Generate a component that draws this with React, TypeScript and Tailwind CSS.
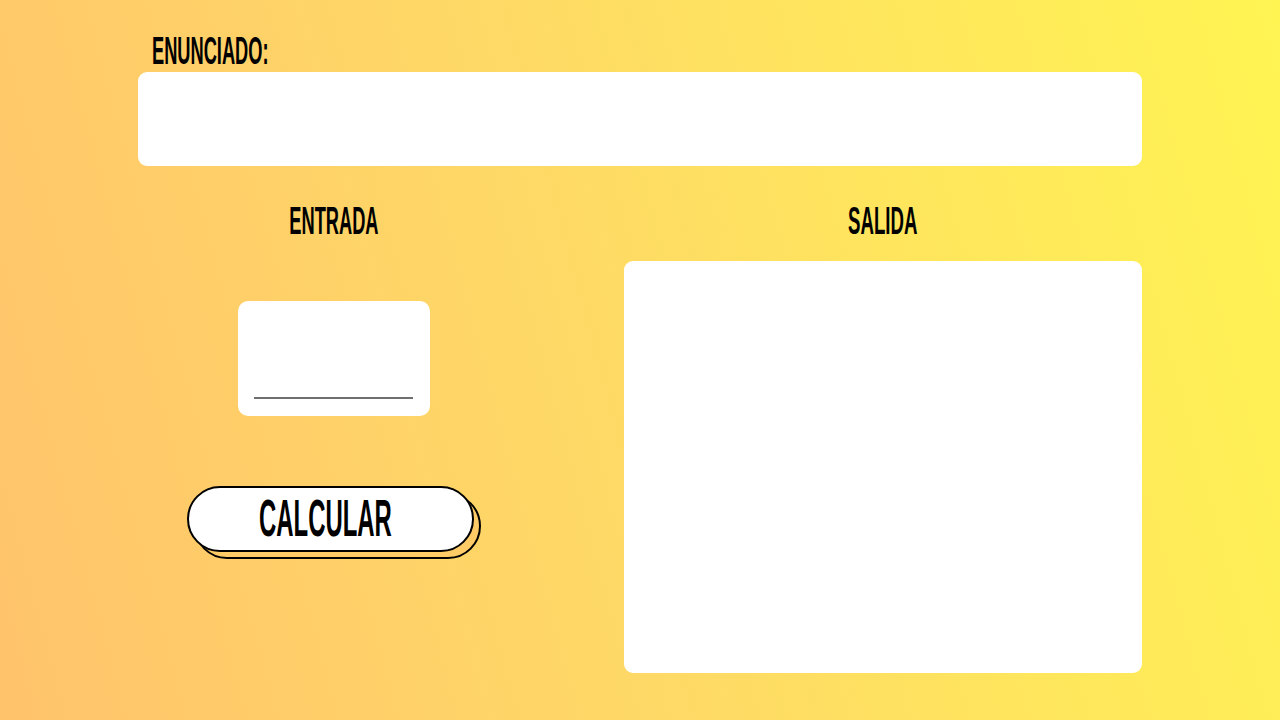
import React from 'react';

const font = { fontFamily: '"Liberation Sans", Arial, sans-serif' };

function Heading({ children, className = '' }: { children: React.ReactNode; className?: string }) {
  return (
    <div className={`text-[38px] leading-[38px] font-bold text-black whitespace-nowrap ${className}`} style={font}>
      {children}
    </div>
  );
}

export default function App() {
  return (
    <div className="min-h-screen w-full bg-[linear-gradient(75deg,#ffc36b_0%,#fed966_45%,#fff452_100%)] overflow-hidden">
      <div className="w-[1004px] mx-auto pt-[32px]">
        <Heading className="pl-[14px] mb-[2px]">
          <span className="inline-block scale-x-[0.48] origin-left">ENUNCIADO:</span>
        </Heading>
        <div className="h-[94px] bg-white rounded-[9px]" />

        <div className="flex mt-[36px]">
          <div className="w-[392px] flex flex-col items-center">
            <Heading>
              <span className="inline-block scale-x-[0.48]">ENTRADA</span>
            </Heading>
            <div className="mt-[61px] w-[192px] h-[115px] bg-white rounded-[10px] flex flex-col justify-end pl-[16px] pr-[17px] pb-[17px]">
              <div className="h-[2px] bg-[#6f6f6f]" />
            </div>
            <div className="mt-[70px] relative w-[294px] h-[73px]">
              <div className="absolute left-[7px] top-[7px] w-[287px] h-[66px] rounded-full border-2 border-black bg-[#fecb66]" />
              <button className="absolute left-0 top-0 w-[287px] h-[66px] rounded-full border-2 border-black bg-white flex items-center justify-center">
                <span
                  className="inline-block text-[52px] leading-[52px] font-bold text-black scale-x-[0.46] -translate-x-[5px] -translate-y-[1px] whitespace-nowrap"
                  style={font}
                >
                  CALCULAR
                </span>
              </button>
            </div>
          </div>

          <div className="w-[518px] ml-auto flex flex-col items-center">
            <Heading>
              <span className="inline-block scale-x-[0.49]">SALIDA</span>
            </Heading>
            <div className="mt-[21px] w-full h-[412px] bg-white rounded-[9px]" />
          </div>
        </div>
      </div>
    </div>
  );
}
